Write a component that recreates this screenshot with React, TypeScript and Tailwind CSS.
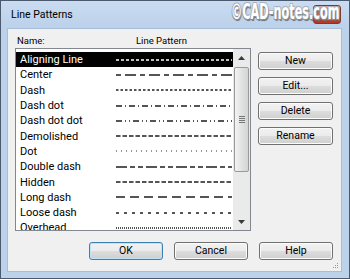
import React from "react";

const rows: { name: string; dash: string; color?: string }[] = [
  { name: "Aligning Line", dash: "3 2" },
  { name: "Center", dash: "5 4 11 4" },
  { name: "Dash", dash: "2.5 2" },
  { name: "Dash dot", dash: "6 3 1 3" },
  { name: "Dash dot dot", dash: "6 3 1 3 1 3" },
  { name: "Demolished", dash: "4.5 2" },
  { name: "Dot", dash: "1 4", color: "#777" },
  { name: "Double dash", dash: "11 3 5 3 5 3" },
  { name: "Hidden", dash: "4.5 2" },
  { name: "Long dash", dash: "9 5" },
  { name: "Loose dash", dash: "3 5" },
  { name: "Overhead", dash: "1 1" },
];

function Btn({ label, def }: { label: string; def?: boolean }) {
  return (
    <div
      className={`flex h-[18px] items-center justify-center rounded-[3px] border text-[10.5px] text-black ${
        def ? "border-[#3c7fb1] shadow-[inset_0_0_0_1px_#bfe3f7]" : "border-[#707070] shadow-[inset_0_0_0_1px_#fcfcfc]"
      } bg-[linear-gradient(#f2f2f2_0%,#ebebeb_50%,#dddddd_51%,#cfcfcf_100%)]`}
    >
      {label}
    </div>
  );
}

export default function App() {
  return (
    <div
      className="flex h-[279px] w-[350px] flex-col border border-[#4b5a6e] bg-[#bcd2eb]"
      style={{ fontFamily: 'Roboto, "Noto Sans", "Liberation Sans", sans-serif' }}
    >
      {/* title bar */}
      <div className="relative flex h-[27px] shrink-0 items-center bg-[linear-gradient(#c9dcf1,#bcd1ea)] pl-[10px]">
        <span className="text-[10.5px] text-black">Line Patterns</span>
        <div className="absolute right-[8px] top-[4px] flex h-[19px] w-[28px] items-start justify-center rounded-[3px] border border-[#7c3a2f] bg-[linear-gradient(#e6a596,#c94b34_55%,#b33620)] pt-[6px] text-[10px] font-bold leading-none text-white">
          x
        </div>
        <span
          className="absolute right-[9px] top-[0px] origin-right scale-x-[0.57] text-[22px] font-bold leading-[22px] text-white"
          style={{
            fontFamily: '"DejaVu Sans Condensed", "DejaVu Sans", sans-serif',
            textShadow:
              "1px 1px 0 #8a8f96, -1px -1px 0 #aab2bc, 1px -1px 0 #aab2bc, -1px 1px 0 #8a8f96, 2px 2px 1px #6c727a",
          }}
        >
          ©CAD-notes.com
        </span>
      </div>

      {/* body */}
      <div className="mb-[6px] ml-[6px] mr-[7px] flex flex-1 flex-col border border-[#a8bdd6] bg-[#f0f0f0] pl-[7px] pr-[8px]">
        <div className="flex h-[19px] items-center pt-[6px] text-[9.5px] text-black">
          <span className="ml-[2px] w-[119px]">Name:</span>
          <span>Line Pattern</span>
        </div>
        <div className="flex">
          {/* list */}
          <div className="flex h-[183px] w-[236px] border border-[#828790] bg-white">
            <div className="flex-1 overflow-hidden pt-[3px]">
              {rows.map((r, i) => {
                const sel = i === 0;
                return (
                  <div
                    key={r.name}
                    className={`flex h-[15.3px] items-center ${sel ? "bg-black text-white" : "text-black"}`}
                  >
                    <span className="w-[100px] pl-[4px] text-[11px] leading-none">{r.name}</span>
                    <svg width="116" height="4" className="block">
                      <line
                        x1="0"
                        y1="2"
                        x2="116"
                        y2="2"
                        stroke={sel ? "#fff" : r.color ?? "#1e1e1e"}
                        strokeWidth="1.4"
                        strokeDasharray={r.dash}
                      />
                    </svg>
                  </div>
                );
              })}
            </div>
            {/* scrollbar */}
            <div className="flex w-[17px] flex-col bg-[#eaeaea]">
              <div className="flex h-[17px] items-center justify-center">
                <svg width="7" height="4">
                  <path d="M0 4 L3.5 0 L7 4Z" fill="#3a3a3a" />
                </svg>
              </div>
              <div className="mx-[1px] mt-[1px] flex h-[105px] items-center justify-center rounded-[2px] border border-[#9a9a9a] bg-[linear-gradient(90deg,#f3f3f3,#e2e2e2_50%,#d4d4d4)]">
                <div className="flex flex-col gap-[1px]">
                  <div className="h-[1px] w-[6px] bg-[#777]" />
                  <div className="h-[1px] w-[6px] bg-[#777]" />
                  <div className="h-[1px] w-[6px] bg-[#777]" />
                  <div className="h-[1px] w-[6px] bg-[#777]" />
                </div>
              </div>
              <div className="flex-1" />
              <div className="flex h-[17px] items-center justify-center">
                <svg width="7" height="4">
                  <path d="M0 0 L3.5 4 L7 0Z" fill="#3a3a3a" />
                </svg>
              </div>
            </div>
          </div>
          {/* right buttons */}
          <div className="ml-[7px] flex w-[75px] flex-col gap-[7px] pt-[4px]">
            <Btn label="New" />
            <Btn label="Edit..." />
            <Btn label="Delete" />
            <Btn label="Rename" />
          </div>
        </div>
        <div className="mt-[11px] flex justify-end gap-[11px]">
          <div className="w-[74px]">
            <Btn label="OK" def />
          </div>
          <div className="w-[74px]">
            <Btn label="Cancel" />
          </div>
          <div className="w-[74px]">
            <Btn label="Help" />
          </div>
        </div>
        <div className="relative flex-1">
          <svg width="6" height="6" className="absolute bottom-[2px] right-[-6px]">
            <rect x="4" y="0" width="1" height="1" fill="#999" />
            <rect x="2" y="2" width="1" height="1" fill="#999" />
            <rect x="4" y="2" width="1" height="1" fill="#999" />
            <rect x="0" y="4" width="1" height="1" fill="#999" />
            <rect x="2" y="4" width="1" height="1" fill="#999" />
            <rect x="4" y="4" width="1" height="1" fill="#999" />
          </svg>
        </div>
      </div>
    </div>
  );
}
